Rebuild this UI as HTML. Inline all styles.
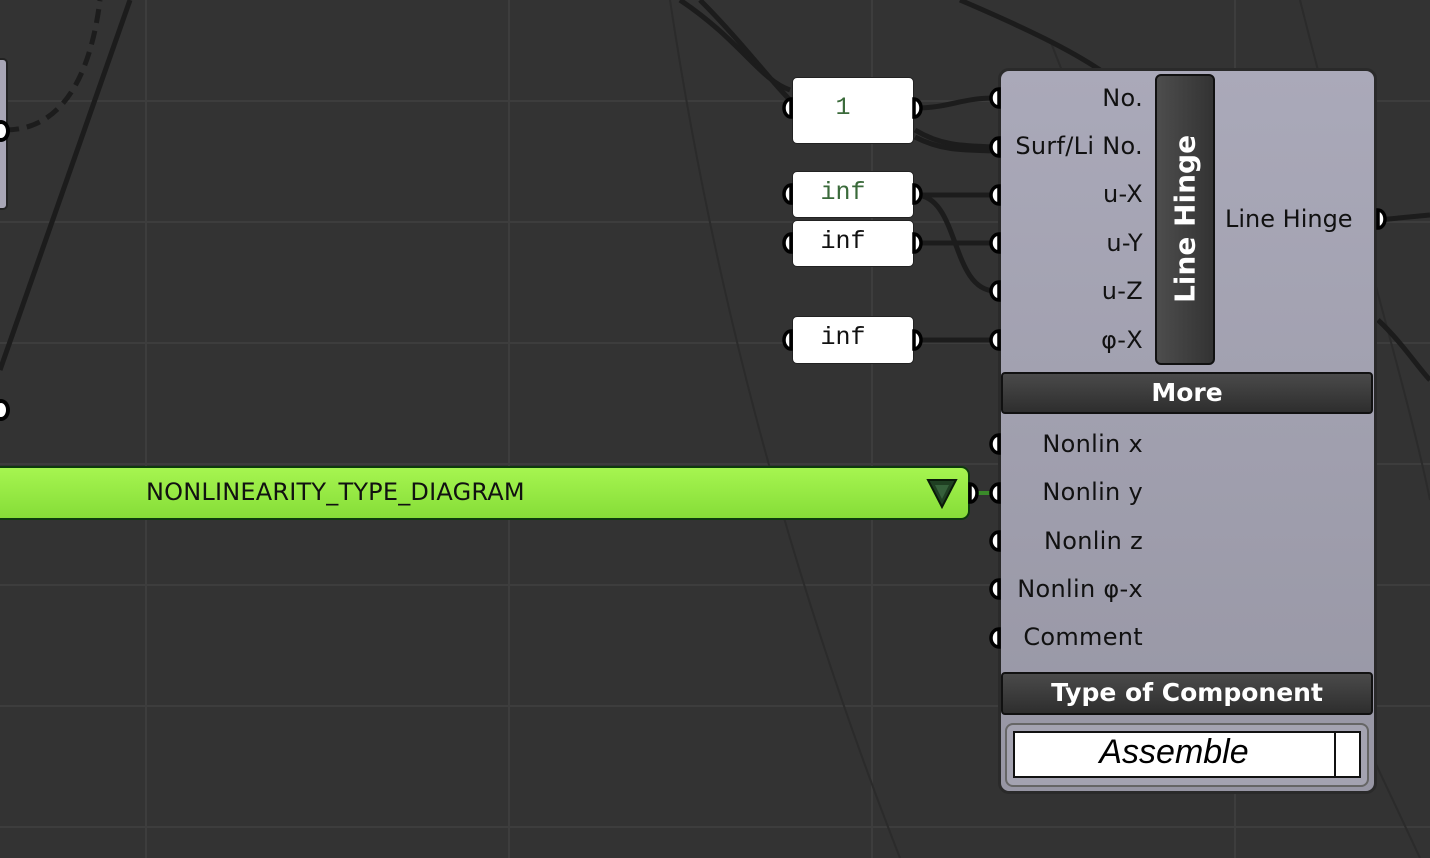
<!DOCTYPE html>
<html><head><style>
body{margin:0;width:1430px;height:858px;overflow:hidden;background:#333333;font-family:"DejaVu Sans","Liberation Sans",sans-serif;position:relative}
.abs{position:absolute}
.panel{position:absolute;background:#fff;border:1.5px solid #222;border-radius:5px;font-family:"Liberation Mono",monospace;font-size:25px;text-align:center;box-sizing:border-box;padding-right:20px}
.lbl{position:absolute;right:287px;font-size:24px;color:#111;text-align:right;white-space:nowrap;letter-spacing:0.3px}
.bar{position:absolute;left:1001px;width:372px;background:linear-gradient(#4a4a4a,#2e2e2e);border:2px solid #111;border-radius:4px;box-sizing:border-box;color:#fff;font-weight:bold;font-size:25px;text-align:center}
</style></head><body>
<svg class="abs" style="left:0;top:0" width="1430" height="858">
<g stroke="#3d3d3d" stroke-width="2">
<line x1="146" y1="0" x2="146" y2="858"/><line x1="509" y1="0" x2="509" y2="858"/><line x1="872" y1="0" x2="872" y2="858"/><line x1="1235" y1="0" x2="1235" y2="858"/>
<line x1="0" y1="101" x2="1430" y2="101"/><line x1="0" y1="222" x2="1430" y2="222"/><line x1="0" y1="343" x2="1430" y2="343"/><line x1="0" y1="464" x2="1430" y2="464"/><line x1="0" y1="585" x2="1430" y2="585"/><line x1="0" y1="706" x2="1430" y2="706"/><line x1="0" y1="827" x2="1430" y2="827"/>
</g>
<g fill="none" stroke="#2b2b2b" stroke-width="2">
<path d="M670 0 C700 200 760 500 900 858"/><path d="M1050 40 C1150 300 1300 600 1420 858"/><path d="M1300 0 C1350 200 1410 400 1430 500"/>
</g>
<g fill="none" stroke="#1c1c1c" stroke-width="5">
<path d="M130 0 L0 370"/>
<path d="M5 130 C60 130 90 80 100 0" stroke-dasharray="14 8"/>
<path d="M680 0 C740 40 760 80 790 90"/><path d="M700 0 C740 40 770 80 790 100"/>
<path d="M960 0 C1030 30 1070 50 1100 70"/>
<path d="M915 108 C950 108 960 98 995 98"/>
<path d="M915 130 C940 145 960 146 995 147"/><path d="M915 137 C940 150 960 150 995 151"/>
<path d="M915 195 L995 195"/>
<path d="M915 195 C960 195 950 290 995 291"/>
<path d="M915 243 L995 243"/>
<path d="M915 340 L995 340"/>
<path d="M1378 220 L1430 215"/><path d="M1378 320 C1400 340 1420 370 1430 380"/>
</g>
<path d="M970 493 L995 493" stroke="#3a8a2a" stroke-width="4"/>
</svg>
<div class="abs" style="left:-10px;top:58px;width:14px;height:148px;background:#a8a6b6;border:2px solid #222;border-radius:5px"></div>
<div class="abs" style="left:-8px;top:399px;width:18px;height:22px;border-radius:50%;background:#fff;border:4px solid #000;box-sizing:border-box"></div>
<div class="abs" style="left:-8px;top:120px;width:18px;height:22px;border-radius:50%;background:#fff;border:4px solid #000;box-sizing:border-box"></div>

<div class="panel" style="left:792px;top:77px;width:122px;height:67px;line-height:60px;color:#3a6a3a">1</div>
<div class="panel" style="left:792px;top:171px;width:122px;height:47px;line-height:42px;color:#3a6a3a">inf</div>
<div class="panel" style="left:792px;top:220px;width:122px;height:47px;line-height:42px;color:#111">inf</div>
<div class="panel" style="left:792px;top:316px;width:122px;height:48px;line-height:42px;color:#111">inf</div>

<div class="abs" style="left:-10px;top:466px;width:980px;height:54px;background:linear-gradient(#a6f550,#86dd38);border:2px solid #0e3a0e;border-radius:9px;box-sizing:border-box"></div>
<div class="abs" style="left:146px;top:478px;font-size:24px;color:#111;letter-spacing:0.2px">NONLINEARITY_TYPE_DIAGRAM</div>
<svg class="abs" style="left:925px;top:476px" width="34" height="34"><polygon points="3,4 31,4 17,31" fill="#1f3f22" stroke="#0a1a0a" stroke-width="2"/><polygon points="10,9 24,9 17,23" fill="#35603a"/></svg>

<div class="abs" style="left:998px;top:68px;width:379px;height:726px;background:linear-gradient(#aaa9b9,#9796a4);border:3px solid #2a2a2a;border-radius:11px;box-sizing:border-box"></div>
<div class="abs" style="left:1155px;top:74px;width:60px;height:291px;background:linear-gradient(90deg,#4d4d4d,#333);border:2px solid #111;border-radius:6px;box-sizing:border-box"></div>
<div class="abs" style="left:1185px;top:219px;transform:translate(-50%,-50%) rotate(-90deg);color:#fff;font-weight:bold;font-size:28px;white-space:nowrap">Line Hinge</div>
<div class="lbl" style="top:84px">No.</div>
<div class="lbl" style="top:132px">Surf/Li No.</div>
<div class="lbl" style="top:180px">u-X</div>
<div class="lbl" style="top:229px">u-Y</div>
<div class="lbl" style="top:277px">u-Z</div>
<div class="lbl" style="top:326px">φ-X</div>
<div class="abs" style="left:1225px;top:205px;font-size:24px;color:#111">Line Hinge</div>
<div class="bar" style="top:372px;height:42px;line-height:37px">More</div>
<div class="lbl" style="top:430px">Nonlin x</div>
<div class="lbl" style="top:478px">Nonlin y</div>
<div class="lbl" style="top:527px">Nonlin z</div>
<div class="lbl" style="top:575px">Nonlin φ-x</div>
<div class="lbl" style="top:623px">Comment</div>
<div class="bar" style="top:672px;height:43px;line-height:38px">Type of Component</div>
<div class="abs" style="left:1005px;top:723px;width:364px;height:64px;border:2px solid #666;border-radius:8px;box-sizing:border-box;background:#a4a3b1"></div>
<div class="abs" style="left:1013px;top:731px;width:348px;height:47px;background:#fff;border:2px solid #111;box-sizing:border-box"></div>
<div class="abs" style="left:1334px;top:731px;width:27px;height:47px;border:2px solid #111;box-sizing:border-box;background:#fff"></div>
<div class="abs" style="left:1013px;top:733px;width:322px;text-align:center;font-style:italic;font-size:34px;color:#000;font-family:'Liberation Sans',sans-serif">Assemble</div>

<svg class="abs" style="left:0;top:0" width="1430" height="858">
<g fill="#fff" stroke="#000" stroke-width="3.5">
<path d="M791 99 A7 9 0 0 0 791 117 Z"/><path d="M791 185 A7 9 0 0 0 791 203 Z"/><path d="M791 234 A7 9 0 0 0 791 252 Z"/><path d="M791 331 A7 9 0 0 0 791 349 Z"/>
<path d="M914 99 A7 9 0 0 1 914 117 Z"/><path d="M914 185 A7 9 0 0 1 914 203 Z"/><path d="M914 234 A7 9 0 0 1 914 252 Z"/><path d="M914 331 A7 9 0 0 1 914 349 Z"/>
<path d="M970 484 A7 9 0 0 1 970 502 Z"/>
<path d="M1378 210 A7 9 0 0 1 1378 228 Z"/>
</g>
<g fill="#fff" stroke="#000" stroke-width="3.5">
<path d="M999 89 A8 9 0 0 0 999 107 Z"/><path d="M999 138 A8 9 0 0 0 999 156 Z"/><path d="M999 186 A8 9 0 0 0 999 204 Z"/><path d="M999 234 A8 9 0 0 0 999 252 Z"/><path d="M999 282 A8 9 0 0 0 999 300 Z"/><path d="M999 331 A8 9 0 0 0 999 349 Z"/>
<path d="M999 435 A8 9 0 0 0 999 453 Z"/><path d="M999 484 A8 9 0 0 0 999 502 Z"/><path d="M999 532 A8 9 0 0 0 999 550 Z"/><path d="M999 580 A8 9 0 0 0 999 598 Z"/><path d="M999 629 A8 9 0 0 0 999 647 Z"/>
</g>
</svg>
</body></html>
